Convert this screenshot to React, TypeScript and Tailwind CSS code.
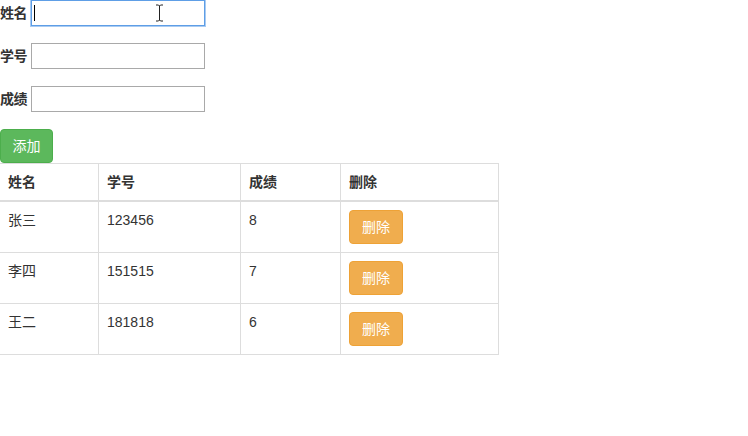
import React from "react";

const rows = [
  { name: "张三", id: "123456", score: "8" },
  { name: "李四", id: "151515", score: "7" },
  { name: "王二", id: "181818", score: "6" },
];

function Field({ label, focused }: { label: string; focused?: boolean }) {
  return (
    <div className="flex items-center h-[26px]">
      <span className="w-[31px] font-bold text-[14px] leading-5 tracking-[-0.5px]">{label}</span>
      <div
        className={
          focused
            ? "relative w-[174px] h-[26px] border border-[#5e9ee6] ring-1 ring-[#a9cbf2] bg-white"
            : "w-[174px] h-[26px] border border-[#a9a9a9] bg-white"
        }
      >
        {focused && (
          <>
            <div className="absolute left-[2px] top-[4px] w-px h-[16px] bg-black" />
            {/* I-beam mouse cursor */}
            <svg className="absolute left-[123px] top-[3px]" width="9" height="18" viewBox="0 0 9 18">
              <path d="M1 1h2.5l1 1 1-1H8M4.5 2v14M1 17h2.5l1-1 1 1H8" fill="none" stroke="#222" strokeWidth="1" />
            </svg>
          </>
        )}
      </div>
    </div>
  );
}

export default function App() {
  return (
    <div
      className="w-[748px] h-[436px] bg-white text-[#333] text-[14px] overflow-hidden"
      style={{ fontFamily: '"Liberation Sans", "Noto Sans CJK SC", sans-serif' }}
    >
      <div className="flex flex-col gap-[17px]">
        <Field label="姓名" focused />
        <Field label="学号" />
        <Field label="成绩" />
      </div>
      <button className="mt-[17px] h-[34px] w-[53px] rounded-[4px] border border-[#4cae4c] bg-[#5cb85c] text-white text-[14px] leading-5">
        添加
      </button>
      <table className="w-[500px] -ml-px border-collapse border border-[#ddd]">
        <thead>
          <tr>
            <th className="w-[99px] text-left font-bold px-[8px] py-[8px] leading-5 border border-[#ddd] border-b-2">姓名</th>
            <th className="w-[142px] text-left font-bold px-[8px] py-[8px] leading-5 border border-[#ddd] border-b-2">学号</th>
            <th className="w-[100px] text-left font-bold px-[8px] py-[8px] leading-5 border border-[#ddd] border-b-2">成绩</th>
            <th className="text-left font-bold px-[8px] py-[8px] leading-5 border border-[#ddd] border-b-2">删除</th>
          </tr>
        </thead>
        <tbody>
          {rows.map((r) => (
            <tr key={r.id}>
              <td className="align-top p-[8px] leading-5 border border-[#ddd]">{r.name}</td>
              <td className="align-top p-[8px] leading-5 border border-[#ddd]">{r.id}</td>
              <td className="align-top p-[8px] leading-5 border border-[#ddd]">{r.score}</td>
              <td className="align-top p-[8px] leading-5 border border-[#ddd]">
                <button className="h-[34px] px-[12px] rounded-[4px] border border-[#eea236] bg-[#f0ad4e] text-white text-[14px] leading-5">
                  删除
                </button>
              </td>
            </tr>
          ))}
        </tbody>
      </table>
    </div>
  );
}
